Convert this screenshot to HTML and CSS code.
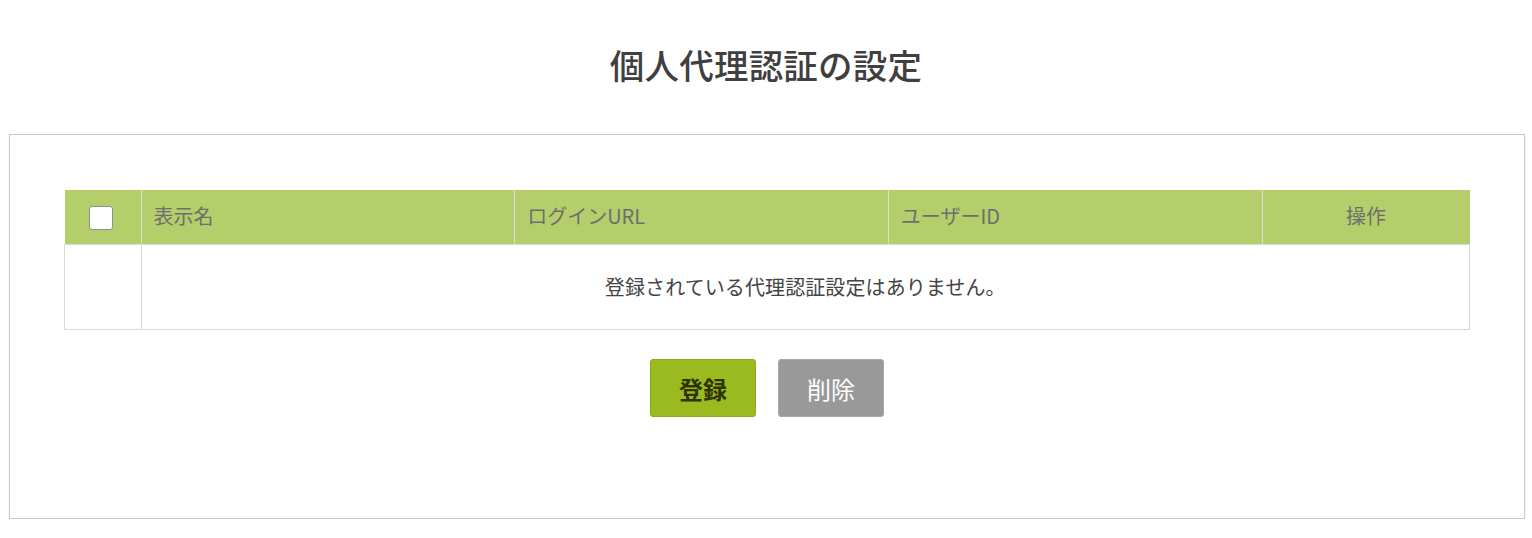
FILE: index.html
```html
<!DOCTYPE html>
<html lang="ja">
<head>
<meta charset="utf-8">
<title>個人代理認証の設定</title>
<link rel="stylesheet" href="styles.css">
</head>
<body>
<h1 class="page-title">個人代理認証の設定</h1>
<div class="panel">
  <table class="list">
    <thead>
      <tr>
        <th class="col-check"><span class="checkbox"></span></th>
        <th class="col-name">表示名</th>
        <th class="col-url">ログインURL</th>
        <th class="col-user">ユーザーID</th>
        <th class="col-op">操作</th>
      </tr>
    </thead>
    <tbody>
      <tr>
        <td class="col-check"></td>
        <td class="empty" colspan="4">登録されている代理認証設定はありません。</td>
      </tr>
    </tbody>
  </table>
  <div class="actions">
    <button class="btn btn-primary" type="button">登録</button>
    <button class="btn btn-gray" type="button">削除</button>
  </div>
</div>
</body>
</html>
```

FILE: styles.css
```css
html, body {
  margin: 0;
  padding: 0;
  background: #fff;
}
body {
  font-family: "Noto Sans CJK JP", "Noto Sans", sans-serif;
  color: #444;
}
.page-title {
  margin: 0 0 44px;
  padding-top: 39px;
  line-height: 51px;
  font-size: 34.5px;
  font-weight: 500;
  letter-spacing: 0.2px;
  text-align: center;
  color: #3f3f3f;
}
.panel {
  margin: 0 7px 0 9px;
  border: 1px solid #c9c9c9;
  box-shadow: 0 1px 2px rgba(0,0,0,0.08);
  padding: 55px 54px 101px;
}
.list {
  width: 100%;
  border-collapse: collapse;
  table-layout: fixed;
}
.list th {
  background: #b3ce6a;
  color: #6e6e6e;
  font-weight: 400;
  font-size: 20px;
  height: 51px;
  padding: 0 0 3px 12px;
  text-align: left;
  border-left: 1px solid #dcdcdc;
}
.list th:first-child {
  border-left: none;
}
.list th.col-check {
  width: 76px;
  padding: 0 0 3px;
  text-align: center;
}
.list th.col-op {
  width: 207px;
  text-align: center;
  padding: 0 0 3px;
}
.checkbox {
  display: inline-block;
  width: 22px;
  height: 22px;
  border: 1px solid #8f8f8f;
  border-radius: 3px;
  background: #fff;
  vertical-align: middle;
  margin-left: -3px;
  margin-top: 0;
}
.list td {
  border: 1px solid #d8d8d8;
  height: 82px;
  padding: 0 0 2px;
}
.list td.empty {
  text-align: center;
  font-size: 20px;
  letter-spacing: 0.1px;
  color: #444;
}
.actions {
  display: flex;
  justify-content: center;
  gap: 22px;
  margin-top: 29px;
}
.btn {
  width: 106px;
  height: 58px;
  border-radius: 3px;
  font-family: "Noto Sans CJK JP", "Noto Sans", sans-serif;
  font-size: 24px;
  padding: 0;
  cursor: pointer;
}
.btn-primary {
  background: #9aba1f;
  border: 1px solid #8ba91c;
  color: #2f3300;
  font-weight: 700;
}
.btn-gray {
  background: #999;
  border: 1px solid #a9a9a9;
  color: #fff;
  font-weight: 400;
}
```
